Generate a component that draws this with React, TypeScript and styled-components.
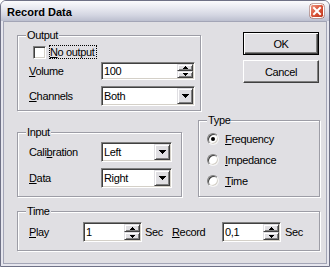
import React from 'react'
import styled, { createGlobalStyle, css } from 'styled-components'

const face = '#e0dfe3'

const GlobalStyle = createGlobalStyle`
  html, body {
    margin: 0;
    padding: 0;
    background: #fff;
  }
  body {
    font-family: "Liberation Sans", Arial, sans-serif;
    font-size: 11px;
    letter-spacing: -0.35px;
    color: #000;
  }
  * {
    box-sizing: border-box;
  }
`

const Window = styled.div`
  width: 330px;
  height: 267px;
  display: flex;
  flex-direction: column;
  background: #e6e6ee;
  border: 1px solid #6f7186;
  border-radius: 6px 6px 0 0;
  overflow: hidden;
`

const TitleBar = styled.div`
  height: 20px;
  flex: none;
  display: flex;
  align-items: center;
  justify-content: space-between;
  padding: 0 4px 0 6px;
  background: linear-gradient(#fbfbfd 0%, #e9eaf1 35%, #d4d6e2 70%, #bcbfcf 100%);
`

const Title = styled.span`
  font-weight: bold;
  letter-spacing: 0;
  padding-top: 1px;
`

const CloseIcon = styled.svg`
  flex: none;
  display: block;
`

const Client = styled.div`
  flex: 1;
  margin: 0 2px 2px 2px;
  border: 1px solid #a3a5b6;
  background: ${face};
  padding: 7px 0 0 13px;
`

const TopRow = styled.div`
  display: flex;
  align-items: flex-start;
`

const MidRow = styled.div`
  display: flex;
  align-items: flex-end;
  margin-top: 3px;
`

const Group = styled.fieldset<{ $w: number; $h: number; $ml?: number; $mt?: number }>`
  margin: ${p => p.$mt ?? 0}px 0 0 ${p => p.$ml ?? 0}px;
  padding: 0;
  min-width: 0;
  width: ${p => p.$w}px;
  height: ${p => p.$h}px;
  border: 1px solid #9d9da6;
  box-shadow: inset 1px 1px 0 #fff, 1px 1px 0 #fff;
`

const Legend = styled.legend`
  margin-left: 8px;
  padding: 0 1px;
  height: 13px;
  line-height: 13px;
  background: ${face};
`

const GroupBody = styled.div<{ $pt: number; $pl: number }>`
  padding: ${p => p.$pt}px 0 0 ${p => p.$pl}px;
`

const CheckRow = styled.div`
  display: flex;
  align-items: center;
  height: 14px;
  margin-left: 4px;
`

const CheckBox = styled.span`
  width: 13px;
  height: 13px;
  background: #fff;
  border: 1px solid;
  border-color: #808080 #fff #fff #808080;
  box-shadow: inset 1px 1px 0 #404040, inset -1px -1px 0 #d4d0c8;
`

const FocusText = styled.span`
  margin-left: 3px;
  padding: 0 1px 0 0;
  height: 14px;
  line-height: 12px;
  border: 1px dotted #000;
`

const FieldRow = styled.div<{ $h: number; $mt: number }>`
  display: flex;
  align-items: center;
  height: ${p => p.$h}px;
  margin-top: ${p => p.$mt}px;
`

const Label = styled.span<{ $w: number; $ml?: number }>`
  width: ${p => p.$w}px;
  margin-left: ${p => p.$ml ?? 0}px;
  flex: none;
  white-space: nowrap;
`

const Field = styled.div<{ $w: number }>`
  width: ${p => p.$w}px;
  height: 100%;
  flex: none;
  display: flex;
  background: #fff;
  border: 1px solid;
  border-color: #808080 #fff #fff #808080;
  box-shadow: inset 1px 1px 0 #404040, inset -1px -1px 0 #d4d0c8;
  padding: 1px;
`

const Value = styled.span`
  flex: 1;
  display: flex;
  align-items: center;
  padding-left: 1px;
`

const raised = css`
  background: ${face};
  border: 1px solid;
  border-color: ${face} #404040 #404040 ${face};
  box-shadow: inset 1px 1px 0 #fff, inset -1px -1px 0 #808080;
`

const SpinButtons = styled.div`
  width: 16px;
  display: flex;
  flex-direction: column;
`

const SpinHalf = styled.div`
  flex: 1;
  ${raised}
  display: flex;
  align-items: center;
  justify-content: center;
`

const DropButton = styled.div`
  width: 16px;
  ${raised}
  display: flex;
  align-items: center;
  justify-content: center;
`

const ButtonColumn = styled.div`
  display: flex;
  flex-direction: column;
  gap: 5px;
  margin: 3px 0 0 42px;
`

const Button = styled.button<{ $default?: boolean }>`
  width: 76px;
  height: 23px;
  padding: 0;
  font: inherit;
  letter-spacing: inherit;
  color: #000;
  background: ${face};
  border: 1px solid;
  ${p =>
    p.$default
      ? css`
          border-color: #000;
          box-shadow: inset 1px 1px 0 #fff, inset -1px -1px 0 #404040, inset -2px -2px 0 #808080;
        `
      : css`
          border-color: #fff #404040 #404040 #fff;
          box-shadow: inset -1px -1px 0 #808080;
        `}
`

const RadioRow = styled.div`
  display: flex;
  align-items: center;
  height: 21px;
`

const RadioCircle = styled.span<{ $checked?: boolean }>`
  width: 12px;
  height: 12px;
  margin-right: 6px;
  border-radius: 50%;
  background: #fff;
  border: 1px solid;
  border-color: #808080 #f4f4f4 #f4f4f4 #808080;
  box-shadow: inset 1px 1px 0 #404040, inset -1px -1px 0 #d4d0c8;
  display: flex;
  align-items: center;
  justify-content: center;

  &::after {
    content: '';
    width: 4px;
    height: 4px;
    border-radius: 50%;
    background: #000;
    display: ${p => (p.$checked ? 'block' : 'none')};
  }
`

const Arrow: React.FC<{ dir: 'up' | 'down'; size?: 'small' | 'big' }> = ({ dir, size = 'small' }) => {
  const w = size === 'big' ? 7 : 5
  const h = size === 'big' ? 4 : 3
  const pts = dir === 'up' ? `0,${h} ${w},${h} ${w / 2},0` : `0,0 ${w},0 ${w / 2},${h}`
  return (
    <svg width={w} height={h} viewBox={`0 0 ${w} ${h}`} shapeRendering="crispEdges">
      <polygon points={pts} fill="#000" />
    </svg>
  )
}

const SpinBox: React.FC<{ value: string; width: number }> = ({ value, width }) => (
  <Field $w={width}>
    <Value>{value}</Value>
    <SpinButtons>
      <SpinHalf><Arrow dir="up" /></SpinHalf>
      <SpinHalf><Arrow dir="down" /></SpinHalf>
    </SpinButtons>
  </Field>
)

const Combo: React.FC<{ value: string; width: number }> = ({ value, width }) => (
  <Field $w={width}>
    <Value>{value}</Value>
    <DropButton><Arrow dir="down" size="big" /></DropButton>
  </Field>
)

export default function App() {
  return (
    <>
      <GlobalStyle />
      <Window>
        <TitleBar>
          <Title>Record Data</Title>
          <CloseIcon width="16" height="16" viewBox="0 0 16 16">
            <defs>
              <linearGradient id="closeFill" x1="0" y1="0" x2="1" y2="1">
                <stop offset="0" stopColor="#f09a84" />
                <stop offset="0.5" stopColor="#d9543a" />
                <stop offset="1" stopColor="#bd3419" />
              </linearGradient>
            </defs>
            <rect x="0.5" y="0.5" width="15" height="15" rx="3" fill="#9c6257" />
            <rect x="1.5" y="1.5" width="13" height="13" rx="2" fill="url(#closeFill)" stroke="#fff" strokeWidth="1" />
            <path d="M5 5 L11 11 M11 5 L5 11" stroke="#fff" strokeWidth="2" strokeLinecap="square" />
          </CloseIcon>
        </TitleBar>
        <Client>
          <TopRow>
            <Group $w={184} $h={82}>
              <Legend>Output</Legend>
              <GroupBody $pt={3} $pl={11}>
                <CheckRow>
                  <CheckBox />
                  <FocusText><u>N</u>o output</FocusText>
                </CheckRow>
                <FieldRow $h={18} $mt={3}>
                  <Label $w={72}><u>V</u>olume</Label>
                  <SpinBox value="100" width={94} />
                </FieldRow>
                <FieldRow $h={20} $mt={6}>
                  <Label $w={72}><u>C</u>hannels</Label>
                  <Combo value="Both" width={94} />
                </FieldRow>
              </GroupBody>
            </Group>
            <ButtonColumn>
              <Button $default>OK</Button>
              <Button>Cancel</Button>
            </ButtonColumn>
          </TopRow>
          <MidRow>
            <Group $w={165} $h={71}>
              <Legend>Input</Legend>
              <GroupBody $pt={3} $pl={11}>
                <FieldRow $h={20} $mt={0}>
                  <Label $w={72}>Cali<u>b</u>ration</Label>
                  <Combo value="Left" width={71} />
                </FieldRow>
                <FieldRow $h={20} $mt={6}>
                  <Label $w={72}><u>D</u>ata</Label>
                  <Combo value="Right" width={71} />
                </FieldRow>
              </GroupBody>
            </Group>
            <Group $w={122} $h={83} $ml={16}>
              <Legend>Type</Legend>
              <GroupBody $pt={1} $pl={8}>
                <RadioRow>
                  <RadioCircle $checked />
                  <span><u>F</u>requency</span>
                </RadioRow>
                <RadioRow>
                  <RadioCircle />
                  <span><u>I</u>mpedance</span>
                </RadioRow>
                <RadioRow>
                  <RadioCircle />
                  <span><u>T</u>ime</span>
                </RadioRow>
              </GroupBody>
            </Group>
          </MidRow>
          <Group $w={303} $h={46} $mt={8}>
            <Legend>Time</Legend>
            <GroupBody $pt={4} $pl={11}>
              <FieldRow $h={20} $mt={0}>
                <Label $w={54}><u>P</u>lay</Label>
                <SpinBox value="1" width={59} />
                <Label $w={27} $ml={3}>Sec</Label>
                <Label $w={50}><u>R</u>ecord</Label>
                <SpinBox value="0,1" width={59} />
                <Label $w={24} $ml={4}>Sec</Label>
              </FieldRow>
            </GroupBody>
          </Group>
        </Client>
      </Window>
    </>
  )
}
